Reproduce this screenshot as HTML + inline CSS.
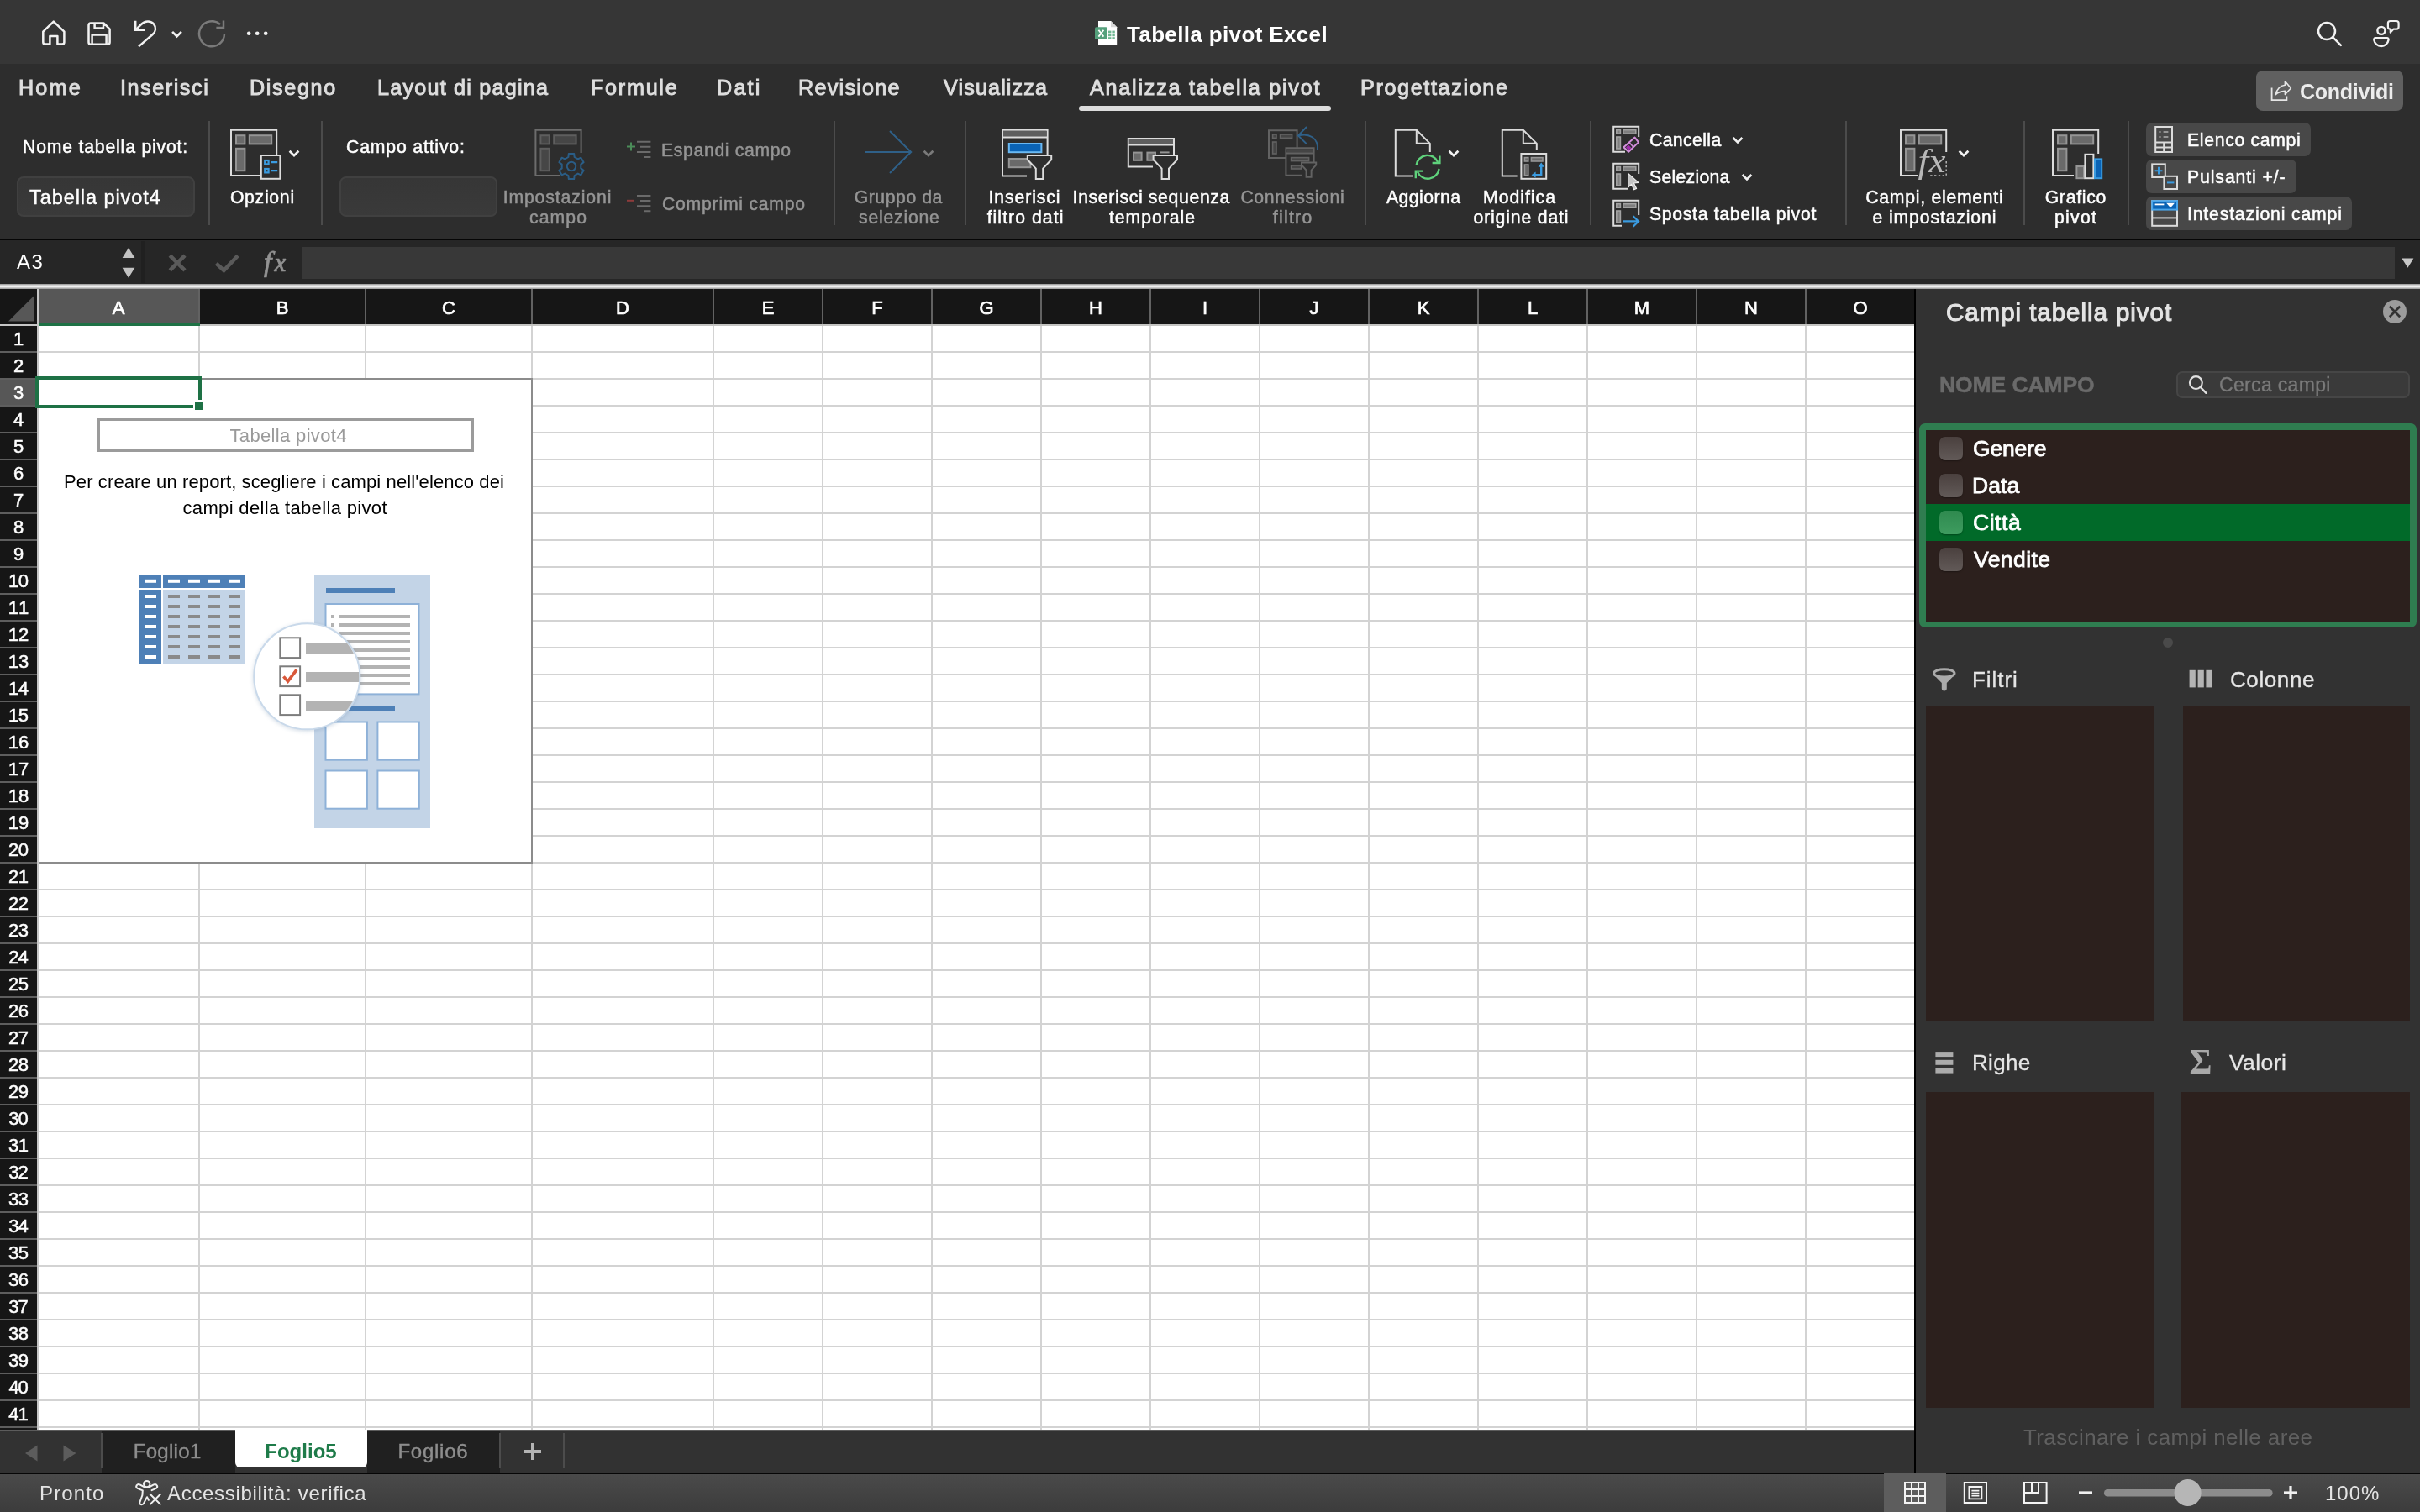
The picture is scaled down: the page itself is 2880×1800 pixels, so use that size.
<!DOCTYPE html>
<html lang="it"><head><meta charset="utf-8"><title>Tabella pivot Excel</title>
<style>
html,body{margin:0;padding:0}
body{width:2880px;height:1800px;position:relative;overflow:hidden;background:#2b2b2b;font-family:"Liberation Sans",sans-serif;}
.a{position:absolute}
.t{white-space:nowrap;will-change:transform}
svg{display:block}

</style></head><body>
<div class="a" style="left:0px;top:0px;width:2880px;height:76px;background:#363636;"></div>
<div class="a" style="left:0px;top:76px;width:2880px;height:208px;background:#2d2d2d;"></div>
<div class="a" style="left:0px;top:284px;width:2880px;height:2px;background:#050505;"></div>
<div class="a" style="left:0px;top:286px;width:2880px;height:52px;background:#262626;"></div>
<div class="a" style="left:168px;top:287px;width:4px;height:50px;background:#202020;"></div>
<div class="a" style="left:360px;top:294px;width:2490px;height:38px;background:#383838;"></div>
<div class="a" style="left:0px;top:337.6px;width:2880px;height:6.6px;background:linear-gradient(#8e8e8e,#fafafa 42%,#f4f4f4 56%,#929292);"></div>
<div class="a" style="left:0px;top:344px;width:2278px;height:1360px;background:#161616;"></div>
<div class="a" style="left:46px;top:388px;width:2232px;height:1314px;background:#fff;"></div>
<div class="a" style="left:46px;top:344px;width:192px;height:40px;background:#575757;"></div>
<div class="a" style="left:46px;top:384px;width:192px;height:4px;background:#1e7145;"></div>
<div class="a" style="left:236px;top:344px;width:2px;height:42px;background:#626262;"></div>
<div class="a t" style="top:356px;font-size:22px;line-height:22px;color:#fff;-webkit-text-stroke:0.7px #fff;left:-459px;width:1200px;text-align:center;"><span>A</span></div>
<div class="a" style="left:434px;top:344px;width:2px;height:42px;background:#626262;"></div>
<div class="a t" style="top:356px;font-size:22px;line-height:22px;color:#fff;-webkit-text-stroke:0.7px #fff;left:-264px;width:1200px;text-align:center;"><span>B</span></div>
<div class="a" style="left:632px;top:344px;width:2px;height:42px;background:#626262;"></div>
<div class="a t" style="top:356px;font-size:22px;line-height:22px;color:#fff;-webkit-text-stroke:0.7px #fff;left:-66px;width:1200px;text-align:center;"><span>C</span></div>
<div class="a" style="left:848px;top:344px;width:2px;height:42px;background:#626262;"></div>
<div class="a t" style="top:356px;font-size:22px;line-height:22px;color:#fff;-webkit-text-stroke:0.7px #fff;left:141px;width:1200px;text-align:center;"><span>D</span></div>
<div class="a" style="left:978px;top:344px;width:2px;height:42px;background:#626262;"></div>
<div class="a t" style="top:356px;font-size:22px;line-height:22px;color:#fff;-webkit-text-stroke:0.7px #fff;left:314px;width:1200px;text-align:center;"><span>E</span></div>
<div class="a" style="left:1108px;top:344px;width:2px;height:42px;background:#626262;"></div>
<div class="a t" style="top:356px;font-size:22px;line-height:22px;color:#fff;-webkit-text-stroke:0.7px #fff;left:444px;width:1200px;text-align:center;"><span>F</span></div>
<div class="a" style="left:1238px;top:344px;width:2px;height:42px;background:#626262;"></div>
<div class="a t" style="top:356px;font-size:22px;line-height:22px;color:#fff;-webkit-text-stroke:0.7px #fff;left:574px;width:1200px;text-align:center;"><span>G</span></div>
<div class="a" style="left:1368px;top:344px;width:2px;height:42px;background:#626262;"></div>
<div class="a t" style="top:356px;font-size:22px;line-height:22px;color:#fff;-webkit-text-stroke:0.7px #fff;left:704px;width:1200px;text-align:center;"><span>H</span></div>
<div class="a" style="left:1498px;top:344px;width:2px;height:42px;background:#626262;"></div>
<div class="a t" style="top:356px;font-size:22px;line-height:22px;color:#fff;-webkit-text-stroke:0.7px #fff;left:834px;width:1200px;text-align:center;"><span>I</span></div>
<div class="a" style="left:1628px;top:344px;width:2px;height:42px;background:#626262;"></div>
<div class="a t" style="top:356px;font-size:22px;line-height:22px;color:#fff;-webkit-text-stroke:0.7px #fff;left:964px;width:1200px;text-align:center;"><span>J</span></div>
<div class="a" style="left:1758px;top:344px;width:2px;height:42px;background:#626262;"></div>
<div class="a t" style="top:356px;font-size:22px;line-height:22px;color:#fff;-webkit-text-stroke:0.7px #fff;left:1094px;width:1200px;text-align:center;"><span>K</span></div>
<div class="a" style="left:1888px;top:344px;width:2px;height:42px;background:#626262;"></div>
<div class="a t" style="top:356px;font-size:22px;line-height:22px;color:#fff;-webkit-text-stroke:0.7px #fff;left:1224px;width:1200px;text-align:center;"><span>L</span></div>
<div class="a" style="left:2018px;top:344px;width:2px;height:42px;background:#626262;"></div>
<div class="a t" style="top:356px;font-size:22px;line-height:22px;color:#fff;-webkit-text-stroke:0.7px #fff;left:1354px;width:1200px;text-align:center;"><span>M</span></div>
<div class="a" style="left:2148px;top:344px;width:2px;height:42px;background:#626262;"></div>
<div class="a t" style="top:356px;font-size:22px;line-height:22px;color:#fff;-webkit-text-stroke:0.7px #fff;left:1484px;width:1200px;text-align:center;"><span>N</span></div>
<div class="a" style="left:2278px;top:344px;width:2px;height:42px;background:#626262;"></div>
<div class="a t" style="top:356px;font-size:22px;line-height:22px;color:#fff;-webkit-text-stroke:0.7px #fff;left:1614px;width:1200px;text-align:center;"><span>O</span></div>
<div class="a" style="left:46px;top:386px;width:2232px;height:2px;background:#c4c4c2;"></div>
<div class="a" style="left:46px;top:384px;width:192px;height:4px;background:#1e7145;"></div>
<div class="a" style="left:0px;top:344px;width:44px;height:42px;background:#161616;"></div>
<svg class="a" style="left:0;top:344px" width="46" height="44"><path d="M10 38.5 L40 8.5 L40 38.5Z" fill="#575757"/></svg>
<div class="a" style="left:44px;top:344px;width:2px;height:1358px;background:#c6c6c6;"></div>
<div class="a" style="left:0px;top:386px;width:44px;height:2px;background:#c6c6c6;"></div>
<div class="a" style="left:236px;top:388px;width:2px;height:1314px;background:#d3d3d3;"></div>
<div class="a" style="left:434px;top:388px;width:2px;height:1314px;background:#d3d3d3;"></div>
<div class="a" style="left:632px;top:388px;width:2px;height:1314px;background:#d3d3d3;"></div>
<div class="a" style="left:848px;top:388px;width:2px;height:1314px;background:#d3d3d3;"></div>
<div class="a" style="left:978px;top:388px;width:2px;height:1314px;background:#d3d3d3;"></div>
<div class="a" style="left:1108px;top:388px;width:2px;height:1314px;background:#d3d3d3;"></div>
<div class="a" style="left:1238px;top:388px;width:2px;height:1314px;background:#d3d3d3;"></div>
<div class="a" style="left:1368px;top:388px;width:2px;height:1314px;background:#d3d3d3;"></div>
<div class="a" style="left:1498px;top:388px;width:2px;height:1314px;background:#d3d3d3;"></div>
<div class="a" style="left:1628px;top:388px;width:2px;height:1314px;background:#d3d3d3;"></div>
<div class="a" style="left:1758px;top:388px;width:2px;height:1314px;background:#d3d3d3;"></div>
<div class="a" style="left:1888px;top:388px;width:2px;height:1314px;background:#d3d3d3;"></div>
<div class="a" style="left:2018px;top:388px;width:2px;height:1314px;background:#d3d3d3;"></div>
<div class="a" style="left:2148px;top:388px;width:2px;height:1314px;background:#d3d3d3;"></div>
<div class="a" style="left:2278px;top:388px;width:2px;height:1314px;background:#d3d3d3;"></div>
<div class="a" style="left:46px;top:418px;width:2232px;height:2px;background:#d3d3d3;"></div>
<div class="a" style="left:0px;top:418px;width:44px;height:2px;background:#5e5e5e;"></div>
<div class="a t" style="top:393px;font-size:22px;line-height:22px;color:#fff;-webkit-text-stroke:0.5px #fff;left:-578px;width:1200px;text-align:center;"><span>1</span></div>
<div class="a" style="left:46px;top:450px;width:2232px;height:2px;background:#d3d3d3;"></div>
<div class="a" style="left:0px;top:450px;width:44px;height:2px;background:#5e5e5e;"></div>
<div class="a t" style="top:425px;font-size:22px;line-height:22px;color:#fff;-webkit-text-stroke:0.5px #fff;left:-578px;width:1200px;text-align:center;"><span>2</span></div>
<div class="a" style="left:0px;top:452px;width:44px;height:30px;background:#575757;"></div>
<div class="a" style="left:46px;top:482px;width:2232px;height:2px;background:#d3d3d3;"></div>
<div class="a" style="left:0px;top:482px;width:44px;height:2px;background:#5e5e5e;"></div>
<div class="a t" style="top:457px;font-size:22px;line-height:22px;color:#fff;-webkit-text-stroke:0.5px #fff;left:-578px;width:1200px;text-align:center;"><span>3</span></div>
<div class="a" style="left:46px;top:514px;width:2232px;height:2px;background:#d3d3d3;"></div>
<div class="a" style="left:0px;top:514px;width:44px;height:2px;background:#5e5e5e;"></div>
<div class="a t" style="top:489px;font-size:22px;line-height:22px;color:#fff;-webkit-text-stroke:0.5px #fff;left:-578px;width:1200px;text-align:center;"><span>4</span></div>
<div class="a" style="left:46px;top:546px;width:2232px;height:2px;background:#d3d3d3;"></div>
<div class="a" style="left:0px;top:546px;width:44px;height:2px;background:#5e5e5e;"></div>
<div class="a t" style="top:521px;font-size:22px;line-height:22px;color:#fff;-webkit-text-stroke:0.5px #fff;left:-578px;width:1200px;text-align:center;"><span>5</span></div>
<div class="a" style="left:46px;top:578px;width:2232px;height:2px;background:#d3d3d3;"></div>
<div class="a" style="left:0px;top:578px;width:44px;height:2px;background:#5e5e5e;"></div>
<div class="a t" style="top:553px;font-size:22px;line-height:22px;color:#fff;-webkit-text-stroke:0.5px #fff;left:-578px;width:1200px;text-align:center;"><span>6</span></div>
<div class="a" style="left:46px;top:610px;width:2232px;height:2px;background:#d3d3d3;"></div>
<div class="a" style="left:0px;top:610px;width:44px;height:2px;background:#5e5e5e;"></div>
<div class="a t" style="top:585px;font-size:22px;line-height:22px;color:#fff;-webkit-text-stroke:0.5px #fff;left:-578px;width:1200px;text-align:center;"><span>7</span></div>
<div class="a" style="left:46px;top:642px;width:2232px;height:2px;background:#d3d3d3;"></div>
<div class="a" style="left:0px;top:642px;width:44px;height:2px;background:#5e5e5e;"></div>
<div class="a t" style="top:617px;font-size:22px;line-height:22px;color:#fff;-webkit-text-stroke:0.5px #fff;left:-578px;width:1200px;text-align:center;"><span>8</span></div>
<div class="a" style="left:46px;top:674px;width:2232px;height:2px;background:#d3d3d3;"></div>
<div class="a" style="left:0px;top:674px;width:44px;height:2px;background:#5e5e5e;"></div>
<div class="a t" style="top:649px;font-size:22px;line-height:22px;color:#fff;-webkit-text-stroke:0.5px #fff;left:-578px;width:1200px;text-align:center;"><span>9</span></div>
<div class="a" style="left:46px;top:706px;width:2232px;height:2px;background:#d3d3d3;"></div>
<div class="a" style="left:0px;top:706px;width:44px;height:2px;background:#5e5e5e;"></div>
<div class="a t" style="top:681px;font-size:22px;line-height:22px;color:#fff;letter-spacing:-0.243px;-webkit-text-stroke:0.5px #fff;left:-578px;width:1200px;text-align:center;text-indent:-0.243px;"><span>10</span></div>
<div class="a" style="left:46px;top:738px;width:2232px;height:2px;background:#d3d3d3;"></div>
<div class="a" style="left:0px;top:738px;width:44px;height:2px;background:#5e5e5e;"></div>
<div class="a t" style="top:713px;font-size:22px;line-height:22px;color:#fff;letter-spacing:1.417px;-webkit-text-stroke:0.5px #fff;left:-578px;width:1200px;text-align:center;text-indent:1.417px;"><span>11</span></div>
<div class="a" style="left:46px;top:770px;width:2232px;height:2px;background:#d3d3d3;"></div>
<div class="a" style="left:0px;top:770px;width:44px;height:2px;background:#5e5e5e;"></div>
<div class="a t" style="top:745px;font-size:22px;line-height:22px;color:#fff;letter-spacing:-0.058px;-webkit-text-stroke:0.5px #fff;left:-578px;width:1200px;text-align:center;text-indent:-0.058px;"><span>12</span></div>
<div class="a" style="left:46px;top:802px;width:2232px;height:2px;background:#d3d3d3;"></div>
<div class="a" style="left:0px;top:802px;width:44px;height:2px;background:#5e5e5e;"></div>
<div class="a t" style="top:777px;font-size:22px;line-height:22px;color:#fff;letter-spacing:-0.123px;-webkit-text-stroke:0.5px #fff;left:-578px;width:1200px;text-align:center;text-indent:-0.123px;"><span>13</span></div>
<div class="a" style="left:46px;top:834px;width:2232px;height:2px;background:#d3d3d3;"></div>
<div class="a" style="left:0px;top:834px;width:44px;height:2px;background:#5e5e5e;"></div>
<div class="a t" style="top:809px;font-size:22px;line-height:22px;color:#fff;letter-spacing:-0.538px;-webkit-text-stroke:0.5px #fff;left:-578px;width:1200px;text-align:center;text-indent:-0.538px;"><span>14</span></div>
<div class="a" style="left:46px;top:866px;width:2232px;height:2px;background:#d3d3d3;"></div>
<div class="a" style="left:0px;top:866px;width:44px;height:2px;background:#5e5e5e;"></div>
<div class="a t" style="top:841px;font-size:22px;line-height:22px;color:#fff;letter-spacing:-0.254px;-webkit-text-stroke:0.5px #fff;left:-578px;width:1200px;text-align:center;text-indent:-0.254px;"><span>15</span></div>
<div class="a" style="left:46px;top:898px;width:2232px;height:2px;background:#d3d3d3;"></div>
<div class="a" style="left:0px;top:898px;width:44px;height:2px;background:#5e5e5e;"></div>
<div class="a t" style="top:873px;font-size:22px;line-height:22px;color:#fff;letter-spacing:-0.079px;-webkit-text-stroke:0.5px #fff;left:-578px;width:1200px;text-align:center;text-indent:-0.079px;"><span>16</span></div>
<div class="a" style="left:46px;top:930px;width:2232px;height:2px;background:#d3d3d3;"></div>
<div class="a" style="left:0px;top:930px;width:44px;height:2px;background:#5e5e5e;"></div>
<div class="a t" style="top:905px;font-size:22px;line-height:22px;color:#fff;letter-spacing:-0.058px;-webkit-text-stroke:0.5px #fff;left:-578px;width:1200px;text-align:center;text-indent:-0.058px;"><span>17</span></div>
<div class="a" style="left:46px;top:962px;width:2232px;height:2px;background:#d3d3d3;"></div>
<div class="a" style="left:0px;top:962px;width:44px;height:2px;background:#5e5e5e;"></div>
<div class="a t" style="top:937px;font-size:22px;line-height:22px;color:#fff;letter-spacing:-0.192px;-webkit-text-stroke:0.5px #fff;left:-578px;width:1200px;text-align:center;text-indent:-0.192px;"><span>18</span></div>
<div class="a" style="left:46px;top:994px;width:2232px;height:2px;background:#d3d3d3;"></div>
<div class="a" style="left:0px;top:994px;width:44px;height:2px;background:#5e5e5e;"></div>
<div class="a t" style="top:969px;font-size:22px;line-height:22px;color:#fff;letter-spacing:-0.161px;-webkit-text-stroke:0.5px #fff;left:-578px;width:1200px;text-align:center;text-indent:-0.161px;"><span>19</span></div>
<div class="a" style="left:46px;top:1026px;width:2232px;height:2px;background:#d3d3d3;"></div>
<div class="a" style="left:0px;top:1026px;width:44px;height:2px;background:#5e5e5e;"></div>
<div class="a t" style="top:1001px;font-size:22px;line-height:22px;color:#fff;letter-spacing:-0.671px;-webkit-text-stroke:0.5px #fff;left:-578px;width:1200px;text-align:center;text-indent:-0.671px;"><span>20</span></div>
<div class="a" style="left:46px;top:1058px;width:2232px;height:2px;background:#d3d3d3;"></div>
<div class="a" style="left:0px;top:1058px;width:44px;height:2px;background:#5e5e5e;"></div>
<div class="a t" style="top:1033px;font-size:22px;line-height:22px;color:#fff;letter-spacing:-0.625px;-webkit-text-stroke:0.5px #fff;left:-578px;width:1200px;text-align:center;text-indent:-0.625px;"><span>21</span></div>
<div class="a" style="left:46px;top:1090px;width:2232px;height:2px;background:#d3d3d3;"></div>
<div class="a" style="left:0px;top:1090px;width:44px;height:2px;background:#5e5e5e;"></div>
<div class="a t" style="top:1065px;font-size:22px;line-height:22px;color:#fff;letter-spacing:-0.503px;-webkit-text-stroke:0.5px #fff;left:-578px;width:1200px;text-align:center;text-indent:-0.503px;"><span>22</span></div>
<div class="a" style="left:46px;top:1122px;width:2232px;height:2px;background:#d3d3d3;"></div>
<div class="a" style="left:0px;top:1122px;width:44px;height:2px;background:#5e5e5e;"></div>
<div class="a t" style="top:1097px;font-size:22px;line-height:22px;color:#fff;letter-spacing:-0.582px;-webkit-text-stroke:0.5px #fff;left:-578px;width:1200px;text-align:center;text-indent:-0.582px;"><span>23</span></div>
<div class="a" style="left:46px;top:1154px;width:2232px;height:2px;background:#d3d3d3;"></div>
<div class="a" style="left:0px;top:1154px;width:44px;height:2px;background:#5e5e5e;"></div>
<div class="a t" style="top:1129px;font-size:22px;line-height:22px;color:#fff;letter-spacing:-0.841px;-webkit-text-stroke:0.5px #fff;left:-578px;width:1200px;text-align:center;text-indent:-0.841px;"><span>24</span></div>
<div class="a" style="left:46px;top:1186px;width:2232px;height:2px;background:#d3d3d3;"></div>
<div class="a" style="left:0px;top:1186px;width:44px;height:2px;background:#5e5e5e;"></div>
<div class="a t" style="top:1161px;font-size:22px;line-height:22px;color:#fff;letter-spacing:-0.703px;-webkit-text-stroke:0.5px #fff;left:-578px;width:1200px;text-align:center;text-indent:-0.703px;"><span>25</span></div>
<div class="a" style="left:46px;top:1218px;width:2232px;height:2px;background:#d3d3d3;"></div>
<div class="a" style="left:0px;top:1218px;width:44px;height:2px;background:#5e5e5e;"></div>
<div class="a t" style="top:1193px;font-size:22px;line-height:22px;color:#fff;letter-spacing:-0.554px;-webkit-text-stroke:0.5px #fff;left:-578px;width:1200px;text-align:center;text-indent:-0.554px;"><span>26</span></div>
<div class="a" style="left:46px;top:1250px;width:2232px;height:2px;background:#d3d3d3;"></div>
<div class="a" style="left:0px;top:1250px;width:44px;height:2px;background:#5e5e5e;"></div>
<div class="a t" style="top:1225px;font-size:22px;line-height:22px;color:#fff;letter-spacing:-0.503px;-webkit-text-stroke:0.5px #fff;left:-578px;width:1200px;text-align:center;text-indent:-0.503px;"><span>27</span></div>
<div class="a" style="left:46px;top:1282px;width:2232px;height:2px;background:#d3d3d3;"></div>
<div class="a" style="left:0px;top:1282px;width:44px;height:2px;background:#5e5e5e;"></div>
<div class="a t" style="top:1257px;font-size:22px;line-height:22px;color:#fff;letter-spacing:-0.638px;-webkit-text-stroke:0.5px #fff;left:-578px;width:1200px;text-align:center;text-indent:-0.638px;"><span>28</span></div>
<div class="a" style="left:46px;top:1314px;width:2232px;height:2px;background:#d3d3d3;"></div>
<div class="a" style="left:0px;top:1314px;width:44px;height:2px;background:#5e5e5e;"></div>
<div class="a t" style="top:1289px;font-size:22px;line-height:22px;color:#fff;letter-spacing:-0.554px;-webkit-text-stroke:0.5px #fff;left:-578px;width:1200px;text-align:center;text-indent:-0.554px;"><span>29</span></div>
<div class="a" style="left:46px;top:1346px;width:2232px;height:2px;background:#d3d3d3;"></div>
<div class="a" style="left:0px;top:1346px;width:44px;height:2px;background:#5e5e5e;"></div>
<div class="a t" style="top:1321px;font-size:22px;line-height:22px;color:#fff;letter-spacing:-0.821px;-webkit-text-stroke:0.5px #fff;left:-578px;width:1200px;text-align:center;text-indent:-0.821px;"><span>30</span></div>
<div class="a" style="left:46px;top:1378px;width:2232px;height:2px;background:#d3d3d3;"></div>
<div class="a" style="left:0px;top:1378px;width:44px;height:2px;background:#5e5e5e;"></div>
<div class="a t" style="top:1353px;font-size:22px;line-height:22px;color:#fff;letter-spacing:-0.534px;-webkit-text-stroke:0.5px #fff;left:-578px;width:1200px;text-align:center;text-indent:-0.534px;"><span>31</span></div>
<div class="a" style="left:46px;top:1410px;width:2232px;height:2px;background:#d3d3d3;"></div>
<div class="a" style="left:0px;top:1410px;width:44px;height:2px;background:#5e5e5e;"></div>
<div class="a t" style="top:1385px;font-size:22px;line-height:22px;color:#fff;letter-spacing:-0.736px;-webkit-text-stroke:0.5px #fff;left:-578px;width:1200px;text-align:center;text-indent:-0.736px;"><span>32</span></div>
<div class="a" style="left:46px;top:1442px;width:2232px;height:2px;background:#d3d3d3;"></div>
<div class="a" style="left:0px;top:1442px;width:44px;height:2px;background:#5e5e5e;"></div>
<div class="a t" style="top:1417px;font-size:22px;line-height:22px;color:#fff;letter-spacing:-0.632px;-webkit-text-stroke:0.5px #fff;left:-578px;width:1200px;text-align:center;text-indent:-0.632px;"><span>33</span></div>
<div class="a" style="left:46px;top:1474px;width:2232px;height:2px;background:#d3d3d3;"></div>
<div class="a" style="left:0px;top:1474px;width:44px;height:2px;background:#5e5e5e;"></div>
<div class="a t" style="top:1449px;font-size:22px;line-height:22px;color:#fff;letter-spacing:-0.831px;-webkit-text-stroke:0.5px #fff;left:-578px;width:1200px;text-align:center;text-indent:-0.831px;"><span>34</span></div>
<div class="a" style="left:46px;top:1506px;width:2232px;height:2px;background:#d3d3d3;"></div>
<div class="a" style="left:0px;top:1506px;width:44px;height:2px;background:#5e5e5e;"></div>
<div class="a t" style="top:1481px;font-size:22px;line-height:22px;color:#fff;letter-spacing:-0.343px;-webkit-text-stroke:0.5px #fff;left:-578px;width:1200px;text-align:center;text-indent:-0.343px;"><span>35</span></div>
<div class="a" style="left:46px;top:1538px;width:2232px;height:2px;background:#d3d3d3;"></div>
<div class="a" style="left:0px;top:1538px;width:44px;height:2px;background:#5e5e5e;"></div>
<div class="a t" style="top:1513px;font-size:22px;line-height:22px;color:#fff;letter-spacing:-0.605px;-webkit-text-stroke:0.5px #fff;left:-578px;width:1200px;text-align:center;text-indent:-0.605px;"><span>36</span></div>
<div class="a" style="left:46px;top:1570px;width:2232px;height:2px;background:#d3d3d3;"></div>
<div class="a" style="left:0px;top:1570px;width:44px;height:2px;background:#5e5e5e;"></div>
<div class="a t" style="top:1545px;font-size:22px;line-height:22px;color:#fff;letter-spacing:-0.736px;-webkit-text-stroke:0.5px #fff;left:-578px;width:1200px;text-align:center;text-indent:-0.736px;"><span>37</span></div>
<div class="a" style="left:46px;top:1602px;width:2232px;height:2px;background:#d3d3d3;"></div>
<div class="a" style="left:0px;top:1602px;width:44px;height:2px;background:#5e5e5e;"></div>
<div class="a t" style="top:1577px;font-size:22px;line-height:22px;color:#fff;letter-spacing:-0.291px;-webkit-text-stroke:0.5px #fff;left:-578px;width:1200px;text-align:center;text-indent:-0.291px;"><span>38</span></div>
<div class="a" style="left:46px;top:1634px;width:2232px;height:2px;background:#d3d3d3;"></div>
<div class="a" style="left:0px;top:1634px;width:44px;height:2px;background:#5e5e5e;"></div>
<div class="a t" style="top:1609px;font-size:22px;line-height:22px;color:#fff;letter-spacing:-0.464px;-webkit-text-stroke:0.5px #fff;left:-578px;width:1200px;text-align:center;text-indent:-0.464px;"><span>39</span></div>
<div class="a" style="left:46px;top:1666px;width:2232px;height:2px;background:#d3d3d3;"></div>
<div class="a" style="left:0px;top:1666px;width:44px;height:2px;background:#5e5e5e;"></div>
<div class="a t" style="top:1641px;font-size:22px;line-height:22px;color:#fff;letter-spacing:-1.229px;-webkit-text-stroke:0.5px #fff;left:-578px;width:1200px;text-align:center;text-indent:-1.229px;"><span>40</span></div>
<div class="a" style="left:46px;top:1698px;width:2232px;height:2px;background:#d3d3d3;"></div>
<div class="a" style="left:0px;top:1698px;width:44px;height:2px;background:#5e5e5e;"></div>
<div class="a t" style="top:1673px;font-size:22px;line-height:22px;color:#fff;letter-spacing:-1.169px;-webkit-text-stroke:0.5px #fff;left:-578px;width:1200px;text-align:center;text-indent:-1.169px;"><span>41</span></div>
<div class="a" style="left:0px;top:1702px;width:2278px;height:2px;background:#5c5c5c;"></div>
<div class="a" style="left:46px;top:450px;width:588px;height:578px;background:#fff;box-sizing:border-box;border:2px solid #8c8c8c;border-left:none;"></div>
<div class="a" style="left:116px;top:498px;width:448px;height:40px;background:#fff;box-sizing:border-box;border:3px solid #9b9b9b;"></div>
<div class="a t" style="top:508px;font-size:22px;line-height:22px;color:#9a9a9a;letter-spacing:0.337px;left:-257px;width:1200px;text-align:center;text-indent:0.337px;"><span>Tabella pivot4</span></div>
<div class="a t" style="top:563px;font-size:22px;line-height:22px;color:#000;letter-spacing:0.112px;left:-262px;width:1200px;text-align:center;text-indent:0.112px;"><span>Per creare un report, scegliere i campi nell'elenco dei</span></div>
<div class="a t" style="top:594px;font-size:22px;line-height:22px;color:#000;letter-spacing:0.345px;left:-261px;width:1200px;text-align:center;text-indent:0.345px;"><span>campi della tabella pivot</span></div>
<div class="a" style="left:42px;top:448px;width:198px;height:38px;background:transparent;box-sizing:border-box;border:4px solid #1e7145;"></div>
<div class="a" style="left:230px;top:476px;width:14px;height:14px;background:#fff;"></div>
<div class="a" style="left:232px;top:478px;width:10px;height:10px;background:#1e7145;"></div>
<div class="a" style="left:0px;top:1704px;width:2278px;height:50px;background:#323232;"></div>
<div class="a" style="left:121px;top:1704px;width:159px;height:50px;background:#202020;"></div>
<div class="a" style="left:437px;top:1704px;width:158px;height:50px;background:#202020;"></div>
<div class="a" style="left:120px;top:1706px;width:2px;height:42px;background:#4c4c4c;"></div>
<div class="a" style="left:594px;top:1706px;width:2px;height:42px;background:#4c4c4c;"></div>
<div class="a" style="left:670px;top:1706px;width:2px;height:42px;background:#4c4c4c;"></div>
<div class="a" style="left:280px;top:1702px;width:157px;height:45px;background:#fff;border-radius:0 0 6px 6px;"></div>
<div class="a t" style="top:1716px;font-size:24px;line-height:24px;color:#8e8e8e;letter-spacing:0.296px;-webkit-text-stroke:0.4px #8e8e8e;left:-401px;width:1200px;text-align:center;text-indent:0.296px;"><span>Foglio1</span></div>
<div class="a t" style="top:1716px;font-size:24px;line-height:24px;color:#1e7b49;font-weight:bold;letter-spacing:0.023px;left:-242px;width:1200px;text-align:center;text-indent:0.023px;"><span>Foglio5</span></div>
<div class="a t" style="top:1716px;font-size:24px;line-height:24px;color:#8e8e8e;letter-spacing:0.740px;-webkit-text-stroke:0.4px #8e8e8e;left:-85px;width:1200px;text-align:center;text-indent:0.740px;"><span>Foglio6</span></div>
<svg class="a" style="left:0;top:1702px" width="700" height="52"><path d="M44.5 18.5 L30 28 L44.5 37.5Z" fill="#5c5c5c"/><path d="M75.5 18.5 L90.5 28 L75.5 37.5Z" fill="#5c5c5c"/><path d="M624 26 h20 M634 16 v20" stroke="#b4b4b4" stroke-width="4" fill="none"/></svg>
<div class="a" style="left:0px;top:1753.5px;width:2880px;height:2px;background:#060606;"></div>
<div class="a" style="left:0px;top:1755.2px;width:2880px;height:44.8px;background:linear-gradient(#4a4a4a,#3c3c3c);"></div>
<div class="a t" style="top:1766px;font-size:24px;line-height:24px;color:#e4e4e4;letter-spacing:1.130px;left:47px;"><span>Pronto</span></div>
<div class="a t" style="top:1766px;font-size:24px;line-height:24px;color:#e4e4e4;letter-spacing:0.691px;left:199px;"><span>Accessibilità: verifica</span></div>
<div class="a" style="left:2242px;top:1753.6px;width:74px;height:46.4px;background:#5d5d5d;"></div>
<div class="a t" style="top:1766px;font-size:24px;line-height:24px;color:#e4e4e4;letter-spacing:1.010px;left:2767px;"><span>100%</span></div>
<div class="a" style="left:2278px;top:344px;width:2px;height:1410px;background:#000;"></div>
<div class="a" style="left:2280px;top:344px;width:600px;height:1410px;background:#323232;"></div>
<div class="a t" style="top:357px;font-size:29.5px;line-height:29.5px;color:#e4e4e4;letter-spacing:0.956px;-webkit-text-stroke:1.05px #e4e4e4;left:2316px;"><span>Campi tabella pivot</span></div>
<div class="a t" style="top:445px;font-size:26.5px;line-height:26.5px;color:#6a6a6a;font-weight:bold;letter-spacing:-0.085px;-webkit-text-stroke:0.5px #6a6a6a;left:2308px;"><span>NOME CAMPO</span></div>
<div class="a" style="left:2590px;top:442px;width:278px;height:32px;background:#3a3a3a;box-sizing:border-box;border:2px solid #464646;border-radius:7px;"></div>
<div class="a t" style="top:447px;font-size:23px;line-height:23px;color:#7a7a7a;letter-spacing:0.337px;-webkit-text-stroke:0.3px #7a7a7a;left:2641px;"><span>Cerca campi</span></div>
<div class="a" style="left:2284px;top:504px;width:592px;height:243px;background:#2f7d50;border-radius:7px;"></div>
<div class="a" style="left:2292px;top:511.5px;width:576px;height:228.5px;background:#2c201d;"></div>
<div class="a" style="left:2292px;top:600px;width:576px;height:44px;background:#016a29;"></div>
<div class="a" style="left:2308px;top:520px;width:28px;height:28px;background:linear-gradient(#4a403e,#625a58);border-radius:7px;box-shadow:0 1px 2px rgba(0,0,0,.35);"></div>
<div class="a t" style="top:521px;font-size:26.5px;line-height:26.5px;color:#fff;letter-spacing:-0.188px;-webkit-text-stroke:0.8px #fff;left:2348px;"><span>Genere</span></div>
<div class="a" style="left:2308px;top:564px;width:28px;height:28px;background:linear-gradient(#4a403e,#625a58);border-radius:7px;box-shadow:0 1px 2px rgba(0,0,0,.35);"></div>
<div class="a t" style="top:565px;font-size:26.5px;line-height:26.5px;color:#fff;letter-spacing:0.108px;-webkit-text-stroke:0.8px #fff;left:2347px;"><span>Data</span></div>
<div class="a" style="left:2308px;top:608px;width:28px;height:28px;background:linear-gradient(#2f8a4f,#3e9c5f);border-radius:7px;box-shadow:0 1px 2px rgba(0,0,0,.35);"></div>
<div class="a t" style="top:609px;font-size:26.5px;line-height:26.5px;color:#fff;letter-spacing:0.532px;-webkit-text-stroke:0.8px #fff;left:2348px;"><span>Città</span></div>
<div class="a" style="left:2308px;top:652px;width:28px;height:28px;background:linear-gradient(#4a403e,#625a58);border-radius:7px;box-shadow:0 1px 2px rgba(0,0,0,.35);"></div>
<div class="a t" style="top:653px;font-size:26.5px;line-height:26.5px;color:#fff;letter-spacing:0.449px;-webkit-text-stroke:0.8px #fff;left:2349px;"><span>Vendite</span></div>
<div class="a" style="left:2573.5px;top:758.5px;width:12px;height:12px;background:#4a4a4a;border-radius:50%;"></div>
<div class="a t" style="top:796px;font-size:26px;line-height:26px;color:#e6e6e6;letter-spacing:0.957px;-webkit-text-stroke:0.3px #e6e6e6;left:2347px;"><span>Filtri</span></div>
<div class="a t" style="top:796px;font-size:26px;line-height:26px;color:#e6e6e6;letter-spacing:0.590px;-webkit-text-stroke:0.3px #e6e6e6;left:2654px;"><span>Colonne</span></div>
<div class="a t" style="top:1252px;font-size:26px;line-height:26px;color:#e6e6e6;letter-spacing:0.327px;-webkit-text-stroke:0.3px #e6e6e6;left:2347px;"><span>Righe</span></div>
<div class="a t" style="top:1252px;font-size:26.5px;line-height:26.5px;color:#e6e6e6;letter-spacing:0.401px;-webkit-text-stroke:0.3px #e6e6e6;left:2653px;"><span>Valori</span></div>
<div class="a" style="left:2292px;top:840px;width:272px;height:376px;background:#2c201d;"></div>
<div class="a" style="left:2598px;top:840px;width:270px;height:376px;background:#2c201d;"></div>
<div class="a" style="left:2292px;top:1300px;width:272px;height:376px;background:#2c201d;"></div>
<div class="a" style="left:2596px;top:1300px;width:272px;height:376px;background:#2c201d;"></div>
<div class="a t" style="top:1698px;font-size:26px;line-height:26px;color:#606060;letter-spacing:0.405px;left:1980px;width:1200px;text-align:center;text-indent:0.405px;"><span>Trascinare i campi nelle aree</span></div>
<div class="a t" style="top:28px;font-size:26px;line-height:26px;color:#fff;font-weight:bold;letter-spacing:0.360px;left:1341px;"><span>Tabella pivot Excel</span></div>
<div class="a t" style="top:92px;font-size:25.2px;line-height:25.2px;color:#dedede;letter-spacing:2.161px;-webkit-text-stroke:0.95px #dedede;left:22px;"><span>Home</span></div>
<div class="a t" style="top:92px;font-size:25.2px;line-height:25.2px;color:#dedede;letter-spacing:1.547px;-webkit-text-stroke:0.95px #dedede;left:143px;"><span>Inserisci</span></div>
<div class="a t" style="top:92px;font-size:25.2px;line-height:25.2px;color:#dedede;letter-spacing:1.634px;-webkit-text-stroke:0.95px #dedede;left:297px;"><span>Disegno</span></div>
<div class="a t" style="top:92px;font-size:25.2px;line-height:25.2px;color:#dedede;letter-spacing:1.209px;-webkit-text-stroke:0.95px #dedede;left:449px;"><span>Layout di pagina</span></div>
<div class="a t" style="top:92px;font-size:25.2px;line-height:25.2px;color:#dedede;letter-spacing:1.716px;-webkit-text-stroke:0.95px #dedede;left:703px;"><span>Formule</span></div>
<div class="a t" style="top:92px;font-size:25.2px;line-height:25.2px;color:#dedede;letter-spacing:2.208px;-webkit-text-stroke:0.95px #dedede;left:853px;"><span>Dati</span></div>
<div class="a t" style="top:92px;font-size:25.2px;line-height:25.2px;color:#dedede;letter-spacing:1.248px;-webkit-text-stroke:0.95px #dedede;left:950px;"><span>Revisione</span></div>
<div class="a t" style="top:92px;font-size:25.2px;line-height:25.2px;color:#dedede;letter-spacing:1.119px;-webkit-text-stroke:0.95px #dedede;left:1123px;"><span>Visualizza</span></div>
<div class="a t" style="top:92px;font-size:25.2px;line-height:25.2px;color:#dedede;letter-spacing:1.754px;-webkit-text-stroke:0.95px #dedede;left:1297px;"><span>Analizza tabella pivot</span></div>
<div class="a t" style="top:92px;font-size:25.2px;line-height:25.2px;color:#dedede;letter-spacing:1.626px;-webkit-text-stroke:0.95px #dedede;left:1619px;"><span>Progettazione</span></div>
<div class="a" style="left:1284px;top:126px;width:300px;height:6px;background:#dcdcdc;border-radius:3px;"></div>
<div class="a" style="left:2685px;top:84px;width:175px;height:48px;background:#606060;border-radius:8px;"></div>
<div class="a t" style="top:97px;font-size:25px;line-height:25px;color:#ececec;font-weight:bold;letter-spacing:-0.251px;left:2737px;"><span>Condividi</span></div>
<div class="a" style="left:248px;top:144px;width:2px;height:124px;background:#4b4b4b;"></div>
<div class="a" style="left:382px;top:144px;width:2px;height:124px;background:#4b4b4b;"></div>
<div class="a" style="left:992px;top:144px;width:2px;height:124px;background:#4b4b4b;"></div>
<div class="a" style="left:1148px;top:144px;width:2px;height:124px;background:#4b4b4b;"></div>
<div class="a" style="left:1624px;top:144px;width:2px;height:124px;background:#4b4b4b;"></div>
<div class="a" style="left:1892px;top:144px;width:2px;height:124px;background:#4b4b4b;"></div>
<div class="a" style="left:2196px;top:144px;width:2px;height:124px;background:#4b4b4b;"></div>
<div class="a" style="left:2408px;top:144px;width:2px;height:124px;background:#4b4b4b;"></div>
<div class="a" style="left:2532px;top:144px;width:2px;height:124px;background:#4b4b4b;"></div>
<div class="a t" style="top:164px;font-size:21.2px;line-height:21.2px;color:#fff;letter-spacing:0.825px;-webkit-text-stroke:0.5px #fff;left:27px;"><span>Nome tabella pivot:</span></div>
<div class="a" style="left:20px;top:210px;width:212px;height:48px;background:linear-gradient(#363636,#3a3a3a);box-sizing:border-box;border:2px solid #404040;border-radius:8px;"></div>
<div class="a t" style="top:224px;font-size:23.5px;line-height:23.5px;color:#fff;letter-spacing:0.932px;-webkit-text-stroke:0.4px #fff;left:35px;"><span>Tabella pivot4</span></div>
<div class="a t" style="top:224px;font-size:21.2px;line-height:21.2px;color:#fff;letter-spacing:0.730px;-webkit-text-stroke:0.5px #fff;left:-288px;width:1200px;text-align:center;text-indent:0.730px;"><span>Opzioni</span></div>
<div class="a t" style="top:164px;font-size:21.2px;line-height:21.2px;color:#fff;letter-spacing:0.846px;-webkit-text-stroke:0.5px #fff;left:412px;"><span>Campo attivo:</span></div>
<div class="a" style="left:404px;top:210px;width:188px;height:48px;background:linear-gradient(#363636,#3a3a3a);box-sizing:border-box;border:2px solid #404040;border-radius:8px;"></div>
<div class="a t" style="top:224px;font-size:21.2px;line-height:21.2px;color:#959595;letter-spacing:0.890px;-webkit-text-stroke:0.5px #959595;left:63px;width:1200px;text-align:center;text-indent:0.890px;"><span>Impostazioni</span></div>
<div class="a t" style="top:248px;font-size:21.2px;line-height:21.2px;color:#959595;letter-spacing:1.105px;-webkit-text-stroke:0.5px #959595;left:64px;width:1200px;text-align:center;text-indent:1.105px;"><span>campo</span></div>
<div class="a t" style="top:168px;font-size:21.2px;line-height:21.2px;color:#959595;letter-spacing:0.669px;-webkit-text-stroke:0.5px #959595;left:787px;"><span>Espandi campo</span></div>
<div class="a t" style="top:232px;font-size:21.2px;line-height:21.2px;color:#959595;letter-spacing:0.768px;-webkit-text-stroke:0.5px #959595;left:788px;"><span>Comprimi campo</span></div>
<div class="a t" style="top:224px;font-size:21.2px;line-height:21.2px;color:#959595;letter-spacing:0.567px;-webkit-text-stroke:0.5px #959595;left:469px;width:1200px;text-align:center;text-indent:0.567px;"><span>Gruppo da</span></div>
<div class="a t" style="top:248px;font-size:21.2px;line-height:21.2px;color:#959595;letter-spacing:0.782px;-webkit-text-stroke:0.5px #959595;left:470px;width:1200px;text-align:center;text-indent:0.782px;"><span>selezione</span></div>
<div class="a t" style="top:224px;font-size:21.2px;line-height:21.2px;color:#fff;letter-spacing:0.896px;-webkit-text-stroke:0.5px #fff;left:619px;width:1200px;text-align:center;text-indent:0.896px;"><span>Inserisci</span></div>
<div class="a t" style="top:248px;font-size:21.2px;line-height:21.2px;color:#fff;letter-spacing:1.063px;-webkit-text-stroke:0.5px #fff;left:620px;width:1200px;text-align:center;text-indent:1.063px;"><span>filtro dati</span></div>
<div class="a t" style="top:224px;font-size:21.2px;line-height:21.2px;color:#fff;letter-spacing:0.667px;-webkit-text-stroke:0.5px #fff;left:770px;width:1200px;text-align:center;text-indent:0.667px;"><span>Inserisci sequenza</span></div>
<div class="a t" style="top:248px;font-size:21.2px;line-height:21.2px;color:#fff;letter-spacing:0.991px;-webkit-text-stroke:0.5px #fff;left:771px;width:1200px;text-align:center;text-indent:0.991px;"><span>temporale</span></div>
<div class="a t" style="top:224px;font-size:21.2px;line-height:21.2px;color:#959595;letter-spacing:0.658px;-webkit-text-stroke:0.5px #959595;left:938px;width:1200px;text-align:center;text-indent:0.658px;"><span>Connessioni</span></div>
<div class="a t" style="top:248px;font-size:21.2px;line-height:21.2px;color:#959595;letter-spacing:1.298px;-webkit-text-stroke:0.5px #959595;left:938px;width:1200px;text-align:center;text-indent:1.298px;"><span>filtro</span></div>
<div class="a t" style="top:224px;font-size:21.2px;line-height:21.2px;color:#fff;letter-spacing:0.449px;-webkit-text-stroke:0.5px #fff;left:1094px;width:1200px;text-align:center;text-indent:0.449px;"><span>Aggiorna</span></div>
<div class="a t" style="top:224px;font-size:21.2px;line-height:21.2px;color:#fff;letter-spacing:1.016px;-webkit-text-stroke:0.5px #fff;left:1208px;width:1200px;text-align:center;text-indent:1.016px;"><span>Modifica</span></div>
<div class="a t" style="top:248px;font-size:21.2px;line-height:21.2px;color:#fff;letter-spacing:0.845px;-webkit-text-stroke:0.5px #fff;left:1210px;width:1200px;text-align:center;text-indent:0.845px;"><span>origine dati</span></div>
<div class="a t" style="top:156px;font-size:21.2px;line-height:21.2px;color:#fff;letter-spacing:0.394px;-webkit-text-stroke:0.5px #fff;left:1963px;"><span>Cancella</span></div>
<div class="a t" style="top:200px;font-size:21.2px;line-height:21.2px;color:#fff;letter-spacing:0.292px;-webkit-text-stroke:0.5px #fff;left:1963px;"><span>Seleziona</span></div>
<div class="a t" style="top:244px;font-size:21.2px;line-height:21.2px;color:#fff;letter-spacing:0.703px;-webkit-text-stroke:0.5px #fff;left:1963px;"><span>Sposta tabella pivot</span></div>
<div class="a t" style="top:224px;font-size:21.2px;line-height:21.2px;color:#fff;letter-spacing:0.730px;-webkit-text-stroke:0.5px #fff;left:1702px;width:1200px;text-align:center;text-indent:0.730px;"><span>Campi, elementi</span></div>
<div class="a t" style="top:248px;font-size:21.2px;line-height:21.2px;color:#fff;letter-spacing:0.876px;-webkit-text-stroke:0.5px #fff;left:1702px;width:1200px;text-align:center;text-indent:0.876px;"><span>e impostazioni</span></div>
<div class="a t" style="top:224px;font-size:21.2px;line-height:21.2px;color:#fff;letter-spacing:0.740px;-webkit-text-stroke:0.5px #fff;left:1870px;width:1200px;text-align:center;text-indent:0.740px;"><span>Grafico</span></div>
<div class="a t" style="top:248px;font-size:21.2px;line-height:21.2px;color:#fff;letter-spacing:1.318px;-webkit-text-stroke:0.5px #fff;left:1870px;width:1200px;text-align:center;text-indent:1.318px;"><span>pivot</span></div>
<div class="a" style="left:2554px;top:146px;width:196px;height:40px;background:#484848;border-radius:7px;"></div>
<div class="a" style="left:2554px;top:190px;width:179px;height:40px;background:#484848;border-radius:7px;"></div>
<div class="a" style="left:2554px;top:234px;width:245px;height:40px;background:#484848;border-radius:7px;"></div>
<div class="a t" style="top:156px;font-size:21.2px;line-height:21.2px;color:#fff;letter-spacing:0.691px;-webkit-text-stroke:0.5px #fff;left:2603px;"><span>Elenco campi</span></div>
<div class="a t" style="top:200px;font-size:21.2px;line-height:21.2px;color:#fff;letter-spacing:0.917px;-webkit-text-stroke:0.5px #fff;left:2603px;"><span>Pulsanti +/-</span></div>
<div class="a t" style="top:244px;font-size:21.2px;line-height:21.2px;color:#fff;letter-spacing:0.842px;-webkit-text-stroke:0.5px #fff;left:2603px;"><span>Intestazioni campi</span></div>
<div class="a t" style="top:300px;font-size:24px;line-height:24px;color:#fff;letter-spacing:1.516px;left:20px;"><span>A3</span></div>
<div class="a t" style="top:295px;font-size:34px;line-height:34px;color:#939393;-webkit-text-stroke:0.7px #939393;font-family:'Liberation Serif',serif;left:314px;font-style:italic;letter-spacing:3px;"><span>f<span style="font-size:31px">x</span></span></div>
<svg class="a" style="left:0;top:0" width="2880" height="1800" viewBox="0 0 2880 1800">
<path d="M51.3 37.6 L63.8 25.6 L76.4 37.6 V50.2 Q76.4 52.6 74 52.6 H68.4 V43 H59.4 V52.6 H53.7 Q51.3 52.6 51.3 50.2Z" stroke="#f2f2f2" stroke-width="2.5" fill="none" stroke-linejoin="round"/>
<path d="M108 27.6 H123.6 L130.6 34.6 V50.2 Q130.6 52.7 128.1 52.7 H108 Q105.5 52.7 105.5 50.2 V30.1 Q105.5 27.6 108 27.6Z M112.6 27.6 V33.6 H123 V27.6 M109.6 52.7 V41.6 H126.6 V52.7" stroke="#f2f2f2" stroke-width="2.5" fill="none" stroke-linejoin="round"/>
<path d="M161.2 24.8 V35.8 H172.2" stroke="#f2f2f2" stroke-width="2.5" fill="none" />
<path d="M161.6 35.4 L168 29 C172.5 24.5 179.5 24.2 183 28.6 C186.2 32.6 185.4 37.6 181.4 41.2 L165 55.4" stroke="#f2f2f2" stroke-width="2.5" fill="none" />
<path d="M205.1 37.9 l5.4 5.4 l5.4 -5.4" stroke="#f2f2f2" stroke-width="2.7" fill="none" />
<path d="M267 40.5 A15 15 0 1 1 262 29" stroke="#7a7a7a" stroke-width="2.5" fill="none" />
<path d="M266 24.6 V33 H257.4" stroke="#7a7a7a" stroke-width="2.5" fill="none" />
<circle cx="296.2" cy="39.8" r="2.3" fill="#f2f2f2"/>
<circle cx="306.2" cy="39.8" r="2.3" fill="#f2f2f2"/>
<circle cx="316.2" cy="39.8" r="2.3" fill="#f2f2f2"/>
<path d="M1307 25 H1322 L1329.2 32.2 V54 H1307Z" fill="#fff"/>
<path d="M1322 25 L1329.2 32.2 H1322Z" fill="#d9d9d9"/>
<rect x="1319" y="36.6" width="3.4" height="2.8" fill="#6fb893" stroke="none" stroke-width="0" rx="0" />
<rect x="1323.4" y="36.6" width="3.4" height="2.8" fill="#6fb893" stroke="none" stroke-width="0" rx="0" />
<rect x="1319" y="40.4" width="3.4" height="2.8" fill="#6fb893" stroke="none" stroke-width="0" rx="0" />
<rect x="1323.4" y="40.4" width="3.4" height="2.8" fill="#6fb893" stroke="none" stroke-width="0" rx="0" />
<rect x="1319" y="44.2" width="3.4" height="2.8" fill="#6fb893" stroke="none" stroke-width="0" rx="0" />
<rect x="1323.4" y="44.2" width="3.4" height="2.8" fill="#6fb893" stroke="none" stroke-width="0" rx="0" />
<rect x="1303" y="32.2" width="14.8" height="14.6" fill="#55a07c" stroke="none" stroke-width="0" rx="1.5" />
<path d="M1307.4 35.8 L1313.4 43.6 M1313.4 35.8 L1307.4 43.6" stroke="#fff" stroke-width="1.8" fill="none" />
<circle cx="2769" cy="37.1" r="10" stroke="#f2f2f2" stroke-width="2.5" fill="none"/>
<path d="M2776.3 44.4 L2785.8 53.9" stroke="#f2f2f2" stroke-width="2.5" fill="none" stroke-linecap="round"/>
<circle cx="2833.9" cy="36.4" r="4.5" stroke="#f2f2f2" stroke-width="2.4" fill="none"/>
<path d="M2827 45.3 H2840.8 Q2842.8 45.3 2842.5 47.6 A8.7 8.7 0 0 1 2825.3 47.6 Q2825 45.3 2827 45.3Z" stroke="#f2f2f2" stroke-width="2.4" fill="none" />
<path d="M2844.5 25 H2852 Q2854.6 25 2854.6 27.6 V32 Q2854.6 34.6 2852 34.6 H2848.6 L2844.8 38.6 V34.6 H2844.5 Q2841.9 34.6 2841.9 32 V27.6 Q2841.9 25 2844.5 25Z" stroke="#f2f2f2" stroke-width="2.2" fill="none" stroke-linejoin="round"/>
<path d="M2703.6 104.4 V119.2 H2721.4 V114.4" stroke="#e6e6e6" stroke-width="1.8" fill="none" />
<path d="M2719.4 96.8 L2726.4 105 L2719.4 112.4 V108.4 C2714.5 108.6 2711 110 2708.2 112.6 C2709.5 106.5 2713.5 102 2719.4 101.2Z" stroke="#e6e6e6" stroke-width="1.6" fill="none" stroke-linejoin="round"/>
<path d="M153 295 L160.4 307 H145.6Z M145.6 318.8 H160.4 L153 330.8Z" fill="#c2c2c2"/>
<path d="M202.2 304.2 L220 321.8 M220 304.2 L202.2 321.8" stroke="#5a5a5a" stroke-width="4.6" fill="none" />
<path d="M257.4 313.6 L266.4 322 L283 304.4" stroke="#5a5a5a" stroke-width="4.6" fill="none" />
<path d="M2858.4 307.6 H2872.4 L2865.4 318.8Z" fill="#c8c8c8"/>
<circle cx="2850" cy="371" r="14" fill="#9c9c9c"/>
<path d="M2843.8 364.8 L2856.2 377.2 M2856.2 364.8 L2843.8 377.2" stroke="#333" stroke-width="2.7" fill="none" />
<circle cx="2613.4" cy="455.6" r="7.4" stroke="#e0e0e0" stroke-width="2.2" fill="none"/>
<path d="M2618.8 461 L2625.4 467.8" stroke="#e0e0e0" stroke-width="2.4" fill="none" stroke-linecap="round"/>
<ellipse cx="2313.8" cy="801.4" rx="12.2" ry="4.6" stroke="#ababab" stroke-width="3" fill="none"/>
<path d="M2301.2 803.2 Q2313.8 810 2326.4 803.2 L2316.8 813 V819.4 Q2316.8 822.4 2313.8 822.4 Q2310.8 822.4 2310.8 819.4 V813Z" fill="#ababab"/>
<rect x="2605.6" y="797.8" width="7.2" height="20.6" fill="#b4b4b4" stroke="none" stroke-width="0" rx="0" />
<rect x="2615.6" y="797.8" width="7.2" height="20.6" fill="#b4b4b4" stroke="none" stroke-width="0" rx="0" />
<rect x="2625.4" y="797.8" width="7.2" height="20.6" fill="#b4b4b4" stroke="none" stroke-width="0" rx="0" />
<rect x="2303.4" y="1252.1" width="21" height="6" fill="#ababab" stroke="none" stroke-width="0" rx="0" />
<rect x="2303.4" y="1261.8" width="21" height="6" fill="#ababab" stroke="none" stroke-width="0" rx="0" />
<rect x="2303.4" y="1271.6" width="21" height="6" fill="#ababab" stroke="none" stroke-width="0" rx="0" />
<text x="2605.4" y="1278" font-family="Liberation Serif,serif" font-weight="bold" font-size="43" fill="#a9a9a9" textLength="27" lengthAdjust="spacingAndGlyphs">Σ</text>
<circle cx="174.7" cy="1766.6" r="3.7" stroke="#f0f0f0" stroke-width="2" fill="none"/>
<path d="M180.6 1774.2 L185.8 1771.9 Q188 1770.6 186.8 1768.4 Q185.6 1766.4 183 1767.4 L178 1770 Q174.7 1771.6 171.4 1770 L166.4 1767.4 Q164 1766.4 162.6 1768.4 Q161.4 1770.6 163.6 1771.9 L169.8 1774.4 L169.4 1780 L166.4 1788.4 Q165.8 1791 168.4 1791.2 Q170.4 1791.2 171.2 1789.4 L175 1782.2 L176.8 1785.8" stroke="#f0f0f0" stroke-width="2" fill="none" stroke-linecap="round" stroke-linejoin="round"/>
<path d="M178.2 1778.2 L191.4 1791.4 M191.4 1778.2 L178.2 1791.4" stroke="#f0f0f0" stroke-width="2" fill="none" />
<path d="M2267 1765 H2291 V1789 H2267Z M2275 1765 V1789 M2283 1765 V1789 M2267 1773 H2291 M2267 1781 H2291" stroke="#f4f4f4" stroke-width="2" fill="none" />
<path d="M2337.8 1765 H2364 V1789 H2337.8Z" stroke="#f4f4f4" stroke-width="2" fill="none" />
<path d="M2343.4 1770 H2358.4 V1784.4 H2343.4Z M2346.4 1774.6 H2355.4 M2346.4 1777.6 H2355.4 M2346.4 1780.6 H2355.4" stroke="#f4f4f4" stroke-width="1.8" fill="none" />
<path d="M2409 1765 H2435.6 V1789 H2409Z M2409 1777 H2426 V1765 M2418 1765 V1777" stroke="#f4f4f4" stroke-width="2" fill="none" />
<rect x="2474" y="1775.4" width="16" height="3.2" fill="#f0f0f0" stroke="none" stroke-width="0" rx="0" />
<rect x="2504" y="1773" width="200.6" height="8.4" fill="#8c8c8c" stroke="none" stroke-width="0" rx="4.2" />
<circle cx="2603.6" cy="1777" r="16" fill="#b6b6b6"/>
<rect x="2718" y="1775.4" width="16" height="3.2" fill="#f0f0f0" stroke="none" stroke-width="0" rx="0" />
<rect x="2724.4" y="1769" width="3.2" height="16" fill="#f0f0f0" stroke="none" stroke-width="0" rx="0" />
<path d="M309 209.0 H275 V154.8 H329.2 V184" stroke="#dcdcdc" stroke-width="2" fill="none" />
<rect x="281" y="161.20000000000002" width="10.4" height="10.2" fill="#6a6a6a" stroke="#959595" stroke-width="2" rx="0" />
<rect x="296.8" y="161.20000000000002" width="26.4" height="10.2" fill="#6a6a6a" stroke="#959595" stroke-width="2" rx="0" />
<rect x="281" y="176.8" width="10.4" height="26.4" fill="#6a6a6a" stroke="#959595" stroke-width="2" rx="0" />
<rect x="310.8" y="185" width="22.6" height="27.8" fill="#2d2d2d" stroke="#dcdcdc" stroke-width="2" rx="0" />
<rect x="315.2" y="191" width="4.4" height="4.4" fill="none" stroke="#3a9be0" stroke-width="2.2" rx="0" />
<rect x="315.2" y="201" width="4.4" height="4.4" fill="none" stroke="#3a9be0" stroke-width="2.2" rx="0" />
<path d="M322.4 193.2 H330.2 M322.4 203.2 H330.2" stroke="#3a9be0" stroke-width="2.2" fill="none" />
<path d="M344.6 179.8 l5.4 5.4 l5.4 -5.4" stroke="#f2f2f2" stroke-width="2.7" fill="none" />
<path d="M667 209.0 H637.4 V154.8 H691.6 V182" stroke="#6c6c6c" stroke-width="2" fill="none" />
<rect x="643.4" y="161.20000000000002" width="10.4" height="10.2" fill="#464646" stroke="#5e5e5e" stroke-width="2" rx="0" />
<rect x="659.1999999999999" y="161.20000000000002" width="26.4" height="10.2" fill="#464646" stroke="#5e5e5e" stroke-width="2" rx="0" />
<rect x="643.4" y="176.8" width="10.4" height="26.4" fill="#464646" stroke="#5e5e5e" stroke-width="2" rx="0" />
<path d="M676.8 182.9 L683.2 182.9 L683.6 187.0 L687.8 189.4 L691.4 187.7 L694.6 193.2 L691.3 195.6 L691.3 200.4 L694.6 202.8 L691.4 208.3 L687.8 206.6 L683.6 209.0 L683.2 213.1 L676.8 213.1 L676.4 209.0 L672.2 206.6 L668.6 208.3 L665.4 202.8 L668.7 200.4 L668.7 195.6 L665.4 193.2 L668.6 187.7 L672.2 189.4 L676.4 187.0Z" stroke="#2a5d86" stroke-width="2" fill="#2d2d2d" stroke-linejoin="round"/>
<circle cx="680" cy="198" r="5.2" stroke="#2a5d86" stroke-width="2" fill="none"/>
<path d="M746 174.6 H756 M751 169.6 V179.6" stroke="#4b8c59" stroke-width="2" fill="none" />
<path d="M758 168.8 H774.4 M762 174.8 H774.4 M758 181 H774.4 M766 187 H774.4" stroke="#6a6a6a" stroke-width="2" fill="none" />
<path d="M746 238.8 H754.4" stroke="#8e3b3b" stroke-width="2" fill="none" />
<path d="M758 233 H774.4 M762 239 H774.4 M758 245.2 H774.4 M766 251.2 H774.4" stroke="#6a6a6a" stroke-width="2" fill="none" />
<path d="M1029 181 H1084 M1059 156 L1084.2 181 L1059 206" stroke="#2f6088" stroke-width="2" fill="none" />
<path d="M1099.6 179.8 l5.4 5.4 l5.4 -5.4" stroke="#7a7a7a" stroke-width="2.7" fill="none" />
<path d="M1222 209.4 H1193 V154.8 H1246.6 V184" stroke="#dcdcdc" stroke-width="2" fill="none" />
<rect x="1194" y="155.8" width="51.6" height="7" fill="#5e5e5e" stroke="none" stroke-width="0" rx="0" />
<path d="M1193 163.6 H1246.6" stroke="#dcdcdc" stroke-width="2" fill="none" />
<rect x="1200.8" y="171" width="38.6" height="10.2" fill="#0a63b5" stroke="#6ab8f2" stroke-width="2" rx="0" />
<rect x="1200.8" y="189" width="25.6" height="10.2" fill="#6a6a6a" stroke="#959595" stroke-width="2" rx="0" />
<path d="M1222.8 185 H1251.2 V190 L1241.2 200.6 V213 H1232.8 V200.6 L1222.8 190Z" stroke="#dcdcdc" stroke-width="2" fill="#2d2d2d" />
<path d="M1372 198.4 H1342.8 V165 H1397 V184" stroke="#dcdcdc" stroke-width="2" fill="none" />
<rect x="1343.8" y="166" width="52.2" height="6" fill="#5e5e5e" stroke="none" stroke-width="0" rx="0" />
<path d="M1342.8 172.6 H1397" stroke="#dcdcdc" stroke-width="2" fill="none" />
<rect x="1349" y="181.6" width="9.6" height="9.2" fill="#6a6a6a" stroke="#959595" stroke-width="2" rx="0" />
<rect x="1365.4" y="181.6" width="9.6" height="9.2" fill="#6a6a6a" stroke="#959595" stroke-width="2" rx="0" />
<path d="M1380 181.4 H1391.6" stroke="#959595" stroke-width="2" fill="none" />
<path d="M1372.6 185 H1401.0 V190 L1391.0 200.6 V213 H1382.6 V200.6 L1372.6 190Z" stroke="#dcdcdc" stroke-width="2" fill="#2d2d2d" />
<path d="M1530 188 H1510 V155.2 H1543.6 V176" stroke="#626262" stroke-width="2" fill="none" />
<rect x="1514.6" y="160" width="4.4" height="4.4" fill="#454545" stroke="#626262" stroke-width="1.6" rx="0" />
<rect x="1523.6" y="160" width="14" height="4.4" fill="#454545" stroke="#626262" stroke-width="1.6" rx="0" />
<rect x="1514.6" y="169" width="4.4" height="14" fill="#454545" stroke="#626262" stroke-width="1.6" rx="0" />
<path d="M1549 208.8 H1530.4 V176.2 H1563.6 V193" stroke="#626262" stroke-width="2" fill="none" />
<rect x="1531.4" y="177.2" width="31.2" height="4.6" fill="#454545" stroke="none" stroke-width="0" rx="0" />
<path d="M1530.4 182.6 H1563.6" stroke="#626262" stroke-width="2" fill="none" />
<rect x="1536.6" y="187.6" width="21" height="4" fill="#454545" stroke="#626262" stroke-width="1.6" rx="0" />
<rect x="1536.6" y="197" width="12" height="4" fill="#454545" stroke="#626262" stroke-width="1.6" rx="0" />
<path d="M1549 193.4 H1566.2 V196.4 L1560.6 202.6 V210.8 H1554.6 V202.6 L1549 196.4Z" stroke="#626262" stroke-width="2" fill="#2d2d2d" />
<path d="M1555 151 L1545 161.4 L1555 171.4 M1545.6 161.4 C1557 158 1569.4 164 1568 178.6" stroke="#2f6088" stroke-width="2" fill="none" />
<path d="M1681.4 209.4 H1660.8 V154.8 H1685.8 L1701.8 170.8 V181 M1685.8 154.8 V170.8 H1701.8" stroke="#dcdcdc" stroke-width="2" fill="none" stroke-linejoin="miter"/>
<path d="M1685.6 196.6 A13.4 13.4 0 0 1 1711.2 193" stroke="#5fd27c" stroke-width="2.4" fill="none" />
<path d="M1712.6 201 A13.4 13.4 0 0 1 1687 204.6" stroke="#5fd27c" stroke-width="2.4" fill="none" />
<path d="M1713.4 185.4 V194 H1704.6" stroke="#5fd27c" stroke-width="2.4" fill="none" />
<path d="M1684.8 212.2 V203.6 H1693.6" stroke="#5fd27c" stroke-width="2.4" fill="none" />
<path d="M1724.6 179.8 l5.4 5.4 l5.4 -5.4" stroke="#f2f2f2" stroke-width="2.7" fill="none" />
<path d="M1805.6 209.4 H1787.8 V154.8 H1812.8 L1828.8 170.8 V178 M1812.8 154.8 V170.8 H1828.8" stroke="#dcdcdc" stroke-width="2" fill="none" stroke-linejoin="miter"/>
<rect x="1810.4" y="183" width="29.8" height="29.8" fill="#2d2d2d" stroke="#dcdcdc" stroke-width="2" rx="0" />
<rect x="1814.4" y="187.6" width="4.4" height="4.4" fill="#6a6a6a" stroke="#959595" stroke-width="1.6" rx="0" />
<rect x="1822.4" y="187.6" width="13.6" height="4.4" fill="#6a6a6a" stroke="#959595" stroke-width="1.6" rx="0" />
<rect x="1814.4" y="196" width="4.4" height="12.8" fill="#6a6a6a" stroke="#959595" stroke-width="1.6" rx="0" />
<path d="M1827 208.2 H1834.2 V198" stroke="#3a9be0" stroke-width="2.4" fill="none" />
<path d="M1834.2 193.4 L1830.6 198.8 H1837.8Z M1822.6 208.2 L1827.6 204.6 V211.8Z" fill="#3a9be0"/>
<path d="M1934 180.8 H1920.2 V150.8 H1950.2 V163" stroke="#dcdcdc" stroke-width="2" fill="none" />
<rect x="1923.8" y="154.60000000000002" width="4.6" height="4.6" fill="#7e7e7e" stroke="#a2a2a2" stroke-width="1.6" rx="0" />
<rect x="1931.8" y="154.60000000000002" width="15" height="4.6" fill="#7e7e7e" stroke="#a2a2a2" stroke-width="1.6" rx="0" />
<rect x="1923.8" y="163.0" width="4.6" height="14" fill="#7e7e7e" stroke="#a2a2a2" stroke-width="1.6" rx="0" />
<path d="M1945.6 163.6 L1950 169.4 L1938.2 180.8 L1932.4 175.2Z" stroke="#d48fdd" stroke-width="2" fill="none" stroke-linejoin="round"/>
<path d="M1939.4 170 L1944 175.2" stroke="#d48fdd" stroke-width="1.6" fill="none" />
<path d="M1938 172.4 L1941.4 176 L1938.4 178.8 L1935 175.4Z" fill="#a22bb0"/>
<path d="M2062.6 164.0 l5.4 5.4 l5.4 -5.4" stroke="#f2f2f2" stroke-width="2.7" fill="none" />
<path d="M1937 224.8 H1920.2 V194.8 H1950.2 V207" stroke="#dcdcdc" stroke-width="2" fill="none" />
<rect x="1923.8" y="198.60000000000002" width="4.6" height="4.6" fill="#7e7e7e" stroke="#a2a2a2" stroke-width="1.6" rx="0" />
<rect x="1931.8" y="198.60000000000002" width="15" height="4.6" fill="#7e7e7e" stroke="#a2a2a2" stroke-width="1.6" rx="0" />
<rect x="1923.8" y="207.0" width="4.6" height="14" fill="#7e7e7e" stroke="#a2a2a2" stroke-width="1.6" rx="0" />
<path d="M1937.6 206.4 L1950 217.4 L1944.4 218 L1947.6 224.4 L1944.6 225.8 L1941.6 219.4 L1937.6 223Z" fill="#c4c4c4" stroke="#f2f2f2" stroke-width="1.2" stroke-linejoin="round"/>
<path d="M2073.6 208.0 l5.4 5.4 l5.4 -5.4" stroke="#f2f2f2" stroke-width="2.7" fill="none" />
<path d="M1930 268.8 H1920.2 V238.8 H1950.2 V256" stroke="#dcdcdc" stroke-width="2" fill="none" />
<rect x="1923.8" y="242.60000000000002" width="4.6" height="4.6" fill="#7e7e7e" stroke="#a2a2a2" stroke-width="1.6" rx="0" />
<rect x="1931.8" y="242.60000000000002" width="15" height="4.6" fill="#7e7e7e" stroke="#a2a2a2" stroke-width="1.6" rx="0" />
<rect x="1923.8" y="251.0" width="4.6" height="14" fill="#7e7e7e" stroke="#a2a2a2" stroke-width="1.6" rx="0" />
<path d="M1931 263.4 H1949.6 M1943.6 257.2 L1950 263.4 L1943.6 269.8" stroke="#3a9be0" stroke-width="2.2" fill="none" />
<path d="M2282 209.0 H2262 V154.8 H2316.2 V181" stroke="#dcdcdc" stroke-width="2" fill="none" />
<rect x="2268" y="161.20000000000002" width="10.4" height="10.2" fill="#6a6a6a" stroke="#959595" stroke-width="2" rx="0" />
<rect x="2283.8" y="161.20000000000002" width="26.4" height="10.2" fill="#6a6a6a" stroke="#959595" stroke-width="2" rx="0" />
<rect x="2268" y="176.8" width="10.4" height="26.4" fill="#6a6a6a" stroke="#959595" stroke-width="2" rx="0" />
<text x="2282.6" y="204.8" font-family="Liberation Serif,serif" font-style="italic" font-size="40" fill="#b8b8b8" textLength="33" lengthAdjust="spacingAndGlyphs">fx</text>
<path d="M2316.2 192 V209 H2296" stroke="#bdbdbd" stroke-width="1.4" fill="none" stroke-dasharray="2.4 2.4"/>
<path d="M2331.6 179.8 l5.4 5.4 l5.4 -5.4" stroke="#f2f2f2" stroke-width="2.7" fill="none" />
<path d="M2468 209.0 H2443 V154.8 H2497.2 V183" stroke="#dcdcdc" stroke-width="2" fill="none" />
<rect x="2449" y="161.20000000000002" width="10.4" height="10.2" fill="#6a6a6a" stroke="#959595" stroke-width="2" rx="0" />
<rect x="2464.8" y="161.20000000000002" width="26.4" height="10.2" fill="#6a6a6a" stroke="#959595" stroke-width="2" rx="0" />
<rect x="2449" y="176.8" width="10.4" height="26.4" fill="#6a6a6a" stroke="#959595" stroke-width="2" rx="0" />
<rect x="2471.4" y="198" width="8.6" height="14.2" fill="#6a6a6a" stroke="#959595" stroke-width="2" rx="0" />
<rect x="2481.4" y="183.8" width="10" height="28.4" fill="#2d2d2d" stroke="#dcdcdc" stroke-width="2" rx="0" />
<rect x="2493" y="189.4" width="8.2" height="22.8" fill="#0a63b5" stroke="#3a9be0" stroke-width="2" rx="0" />
<path d="M2565.2 151 H2585 V181 H2565.2Z M2565.2 169.4 H2585 M2565.2 175.4 H2585 M2575.2 169.4 V181" stroke="#dcdcdc" stroke-width="2" fill="none" />
<path d="M2569.4 157 H2571.6 M2574.6 157 H2580.4 M2569.4 163 H2571.6 M2574.6 163 H2580.4" stroke="#959595" stroke-width="1.8" fill="none" />
<rect x="2561.2" y="195.4" width="15.6" height="15.6" fill="#484848" stroke="#dcdcdc" stroke-width="2" rx="0" />
<path d="M2564.6 203.2 H2573.4 M2569 198.8 V207.6" stroke="#3a9be0" stroke-width="2" fill="none" />
<rect x="2575.4" y="209.8" width="15.6" height="15.2" fill="#484848" stroke="#dcdcdc" stroke-width="2" rx="0" />
<path d="M2579 217.4 H2587.4" stroke="#3a9be0" stroke-width="2" fill="none" />
<rect x="2561.2" y="239.2" width="29.8" height="29.6" fill="none" stroke="#dcdcdc" stroke-width="2" rx="0" />
<path d="M2561.2 259.4 H2591" stroke="#dcdcdc" stroke-width="2" fill="none" />
<rect x="2561.2" y="239.2" width="29.8" height="10.4" fill="#0a63b5" stroke="#4aa5ea" stroke-width="2" rx="0" />
<path d="M2564.6 243.4 H2575.4" stroke="#fff" stroke-width="1.8" fill="none" />
<path d="M2578.2 241.8 H2588 L2583.1 247.2Z" fill="#fff"/>
<rect x="166" y="684" width="26" height="16" fill="#4e80b7" stroke="none" stroke-width="0" rx="0" />
<rect x="194" y="684" width="98" height="16" fill="#4e80b7" stroke="none" stroke-width="0" rx="0" />
<rect x="166" y="702" width="26" height="88" fill="#4e80b7" stroke="none" stroke-width="0" rx="0" />
<rect x="194" y="702" width="98" height="88" fill="#c3d4e7" stroke="none" stroke-width="0" rx="0" />
<rect x="172" y="689.8" width="14" height="4" fill="#fff" stroke="none" stroke-width="0" rx="0" />
<rect x="172" y="708" width="14" height="4" fill="#fff" stroke="none" stroke-width="0" rx="0" />
<rect x="172" y="720" width="14" height="4" fill="#fff" stroke="none" stroke-width="0" rx="0" />
<rect x="172" y="732" width="14" height="4" fill="#fff" stroke="none" stroke-width="0" rx="0" />
<rect x="172" y="744" width="14" height="4" fill="#fff" stroke="none" stroke-width="0" rx="0" />
<rect x="172" y="756" width="14" height="4" fill="#fff" stroke="none" stroke-width="0" rx="0" />
<rect x="172" y="768" width="14" height="4" fill="#fff" stroke="none" stroke-width="0" rx="0" />
<rect x="172" y="780" width="14" height="4" fill="#fff" stroke="none" stroke-width="0" rx="0" />
<rect x="200" y="689.8" width="14" height="4" fill="#fff" stroke="none" stroke-width="0" rx="0" />
<rect x="200" y="708" width="14" height="4" fill="#8a8a8a" stroke="none" stroke-width="0" rx="0" />
<rect x="200" y="720" width="14" height="4" fill="#8a8a8a" stroke="none" stroke-width="0" rx="0" />
<rect x="200" y="732" width="14" height="4" fill="#8a8a8a" stroke="none" stroke-width="0" rx="0" />
<rect x="200" y="744" width="14" height="4" fill="#8a8a8a" stroke="none" stroke-width="0" rx="0" />
<rect x="200" y="756" width="14" height="4" fill="#8a8a8a" stroke="none" stroke-width="0" rx="0" />
<rect x="200" y="768" width="14" height="4" fill="#8a8a8a" stroke="none" stroke-width="0" rx="0" />
<rect x="200" y="780" width="14" height="4" fill="#8a8a8a" stroke="none" stroke-width="0" rx="0" />
<rect x="224" y="689.8" width="14" height="4" fill="#fff" stroke="none" stroke-width="0" rx="0" />
<rect x="224" y="708" width="14" height="4" fill="#8a8a8a" stroke="none" stroke-width="0" rx="0" />
<rect x="224" y="720" width="14" height="4" fill="#8a8a8a" stroke="none" stroke-width="0" rx="0" />
<rect x="224" y="732" width="14" height="4" fill="#8a8a8a" stroke="none" stroke-width="0" rx="0" />
<rect x="224" y="744" width="14" height="4" fill="#8a8a8a" stroke="none" stroke-width="0" rx="0" />
<rect x="224" y="756" width="14" height="4" fill="#8a8a8a" stroke="none" stroke-width="0" rx="0" />
<rect x="224" y="768" width="14" height="4" fill="#8a8a8a" stroke="none" stroke-width="0" rx="0" />
<rect x="224" y="780" width="14" height="4" fill="#8a8a8a" stroke="none" stroke-width="0" rx="0" />
<rect x="248" y="689.8" width="14" height="4" fill="#fff" stroke="none" stroke-width="0" rx="0" />
<rect x="248" y="708" width="14" height="4" fill="#8a8a8a" stroke="none" stroke-width="0" rx="0" />
<rect x="248" y="720" width="14" height="4" fill="#8a8a8a" stroke="none" stroke-width="0" rx="0" />
<rect x="248" y="732" width="14" height="4" fill="#8a8a8a" stroke="none" stroke-width="0" rx="0" />
<rect x="248" y="744" width="14" height="4" fill="#8a8a8a" stroke="none" stroke-width="0" rx="0" />
<rect x="248" y="756" width="14" height="4" fill="#8a8a8a" stroke="none" stroke-width="0" rx="0" />
<rect x="248" y="768" width="14" height="4" fill="#8a8a8a" stroke="none" stroke-width="0" rx="0" />
<rect x="248" y="780" width="14" height="4" fill="#8a8a8a" stroke="none" stroke-width="0" rx="0" />
<rect x="272" y="689.8" width="14" height="4" fill="#fff" stroke="none" stroke-width="0" rx="0" />
<rect x="272" y="708" width="14" height="4" fill="#8a8a8a" stroke="none" stroke-width="0" rx="0" />
<rect x="272" y="720" width="14" height="4" fill="#8a8a8a" stroke="none" stroke-width="0" rx="0" />
<rect x="272" y="732" width="14" height="4" fill="#8a8a8a" stroke="none" stroke-width="0" rx="0" />
<rect x="272" y="744" width="14" height="4" fill="#8a8a8a" stroke="none" stroke-width="0" rx="0" />
<rect x="272" y="756" width="14" height="4" fill="#8a8a8a" stroke="none" stroke-width="0" rx="0" />
<rect x="272" y="768" width="14" height="4" fill="#8a8a8a" stroke="none" stroke-width="0" rx="0" />
<rect x="272" y="780" width="14" height="4" fill="#8a8a8a" stroke="none" stroke-width="0" rx="0" />
<rect x="374" y="684" width="138" height="302" fill="#c3d4e7" stroke="none" stroke-width="0" rx="0" />
<rect x="388" y="700" width="82" height="6" fill="#4e80b7" stroke="none" stroke-width="0" rx="0" />
<rect x="387.5" y="719" width="111" height="107.4" fill="#fff" stroke="#8eb1d8" stroke-width="2" rx="0" />
<rect x="404" y="732" width="84" height="4" fill="#b3b3b3" stroke="none" stroke-width="0" rx="0" />
<rect x="404" y="742" width="84" height="4" fill="#b3b3b3" stroke="none" stroke-width="0" rx="0" />
<rect x="404" y="752" width="84" height="4" fill="#b3b3b3" stroke="none" stroke-width="0" rx="0" />
<rect x="404" y="762" width="84" height="4" fill="#b3b3b3" stroke="none" stroke-width="0" rx="0" />
<rect x="404" y="772" width="84" height="4" fill="#b3b3b3" stroke="none" stroke-width="0" rx="0" />
<rect x="404" y="782" width="84" height="4" fill="#b3b3b3" stroke="none" stroke-width="0" rx="0" />
<rect x="404" y="792" width="84" height="4" fill="#b3b3b3" stroke="none" stroke-width="0" rx="0" />
<rect x="404" y="802" width="84" height="4" fill="#b3b3b3" stroke="none" stroke-width="0" rx="0" />
<rect x="404" y="812" width="84" height="4" fill="#b3b3b3" stroke="none" stroke-width="0" rx="0" />
<rect x="394" y="732" width="4" height="4" fill="#b3b3b3" stroke="none" stroke-width="0" rx="0" />
<rect x="394" y="742" width="4" height="4" fill="#b3b3b3" stroke="none" stroke-width="0" rx="0" />
<rect x="388" y="840.2" width="82" height="6" fill="#4e80b7" stroke="none" stroke-width="0" rx="0" />
<rect x="387.5" y="859.5" width="49.4" height="45.2" fill="#fff" stroke="#8eb1d8" stroke-width="2" rx="0" />
<rect x="387.5" y="917.5" width="49.4" height="45.2" fill="#fff" stroke="#8eb1d8" stroke-width="2" rx="0" />
<rect x="449.4" y="859.5" width="49.4" height="45.2" fill="#fff" stroke="#8eb1d8" stroke-width="2" rx="0" />
<rect x="449.4" y="917.5" width="49.4" height="45.2" fill="#fff" stroke="#8eb1d8" stroke-width="2" rx="0" />
<defs><clipPath id="mc"><circle cx="365.3" cy="805.3" r="62"/></clipPath><filter id="ms" x="-20%" y="-20%" width="140%" height="140%"><feGaussianBlur stdDeviation="2.5"/></filter></defs>
<circle cx="365.3" cy="806.5" r="64" fill="#5f7fa3" opacity=".28" filter="url(#ms)"/>
<circle cx="365.3" cy="805.3" r="63" fill="#fff" stroke="#c9d9ea" stroke-width="2"/>
<g clip-path="url(#mc)">
<rect x="364" y="766" width="80" height="12" fill="#b3b3b3" stroke="none" stroke-width="0" rx="0" />
<rect x="364" y="800" width="80" height="12" fill="#b3b3b3" stroke="none" stroke-width="0" rx="0" />
<rect x="364" y="834" width="80" height="12" fill="#b3b3b3" stroke="none" stroke-width="0" rx="0" />
</g>
<rect x="333.3" y="759.3" width="23.8" height="23.8" fill="#fff" stroke="#7d7d7d" stroke-width="2" rx="0" />
<rect x="333.3" y="793.3" width="23.8" height="23.8" fill="#fff" stroke="#7d7d7d" stroke-width="2" rx="0" />
<rect x="333.3" y="827.3" width="23.8" height="23.8" fill="#fff" stroke="#7d7d7d" stroke-width="2" rx="0" />
<path d="M337.4 805.4 L342.6 811.2 L353 797.4" stroke="#d9583a" stroke-width="3.6" fill="none" />
</svg>
</body></html>
